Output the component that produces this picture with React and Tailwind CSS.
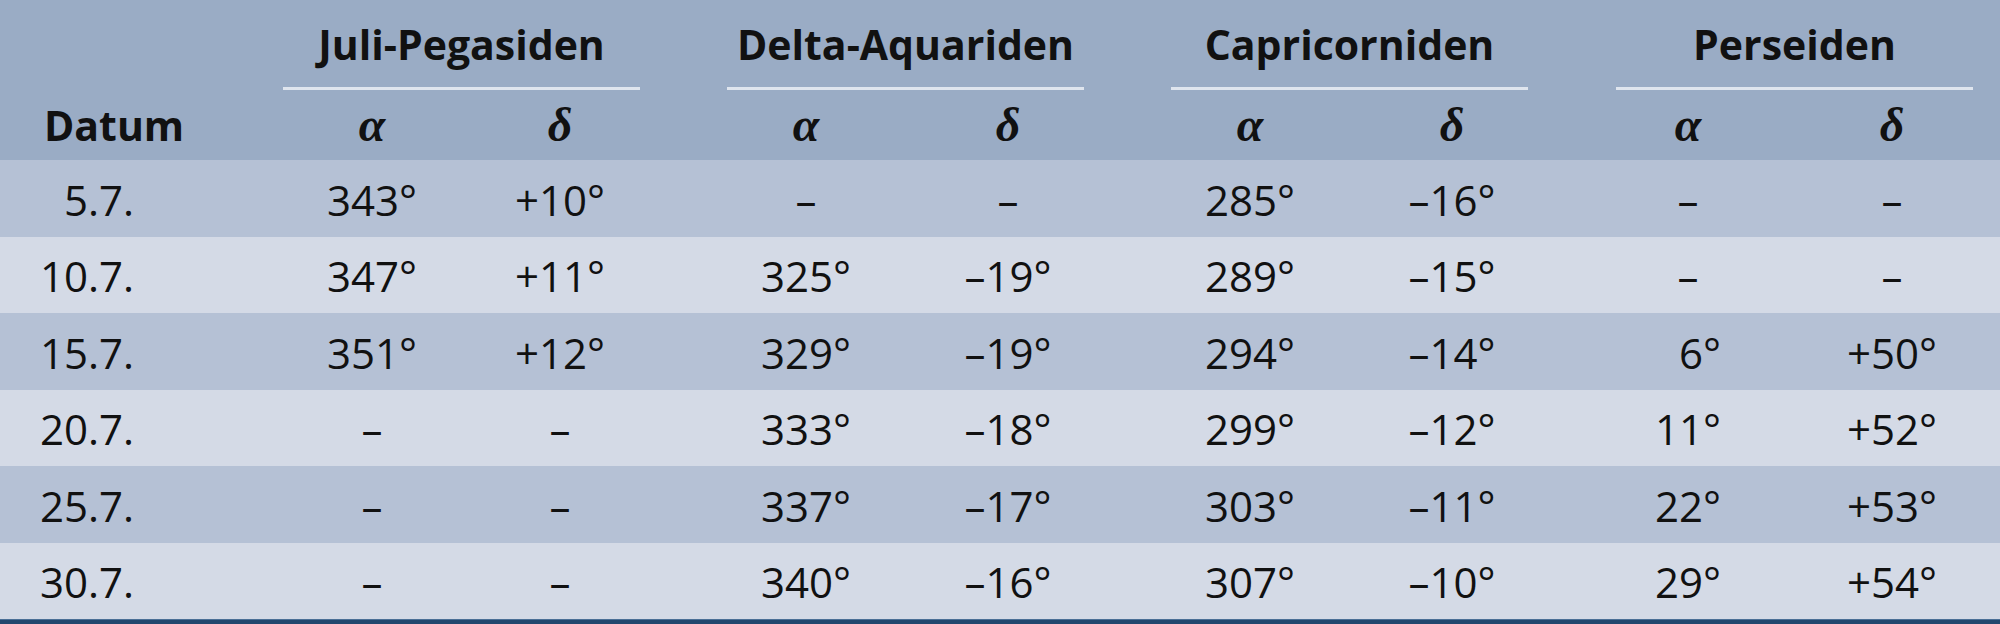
import React from "react";

const COLS =
  "grid grid-cols-[278px_188px_188px_253px_202px_242px_202px_237px_210px]";

const cellPad = [
  "",
  "",
  "",
  "pl-[51px]",
  "",
  "pl-[40px]",
  "",
  "pl-[33px]",
  "pr-[6px]",
];

const groups = [
  { name: "Juli-Pegasiden", ml: "ml-[5px]" },
  { name: "Delta-Aquariden", ml: "ml-[73px]" },
  { name: "Capricorniden", ml: "ml-[62px]" },
  { name: "Perseiden", ml: "ml-[63px]" },
];

const rows = [
  ["5.7.", "343°", "+10°", "–", "–", "285°", "–16°", "–", "–"],
  ["10.7.", "347°", "+11°", "325°", "–19°", "289°", "–15°", "–", "–"],
  ["15.7.", "351°", "+12°", "329°", "–19°", "294°", "–14°", "6°", "+50°"],
  ["20.7.", "–", "–", "333°", "–18°", "299°", "–12°", "11°", "+52°"],
  ["25.7.", "–", "–", "337°", "–17°", "303°", "–11°", "22°", "+53°"],
  ["30.7.", "–", "–", "340°", "–16°", "307°", "–10°", "29°", "+54°"],
];

function Value({ v }) {
  if (v === "6°") {
    return (
      <span>
        <span className="invisible">0</span>6°
      </span>
    );
  }
  return <span>{v}</span>;
}

export default function App() {
  return (
    <div className="w-[2000px] h-[624px] overflow-hidden font-['Open_Sans',sans-serif] text-[#111111] bg-[#d4dae6]">
      {/* Header */}
      <div className="bg-[#9aacc5]">
        <div className="grid grid-cols-[278px_376px_455px_444px_447px] h-[90px]">
          <div />
          {groups.map((g) => (
            <div key={g.name} className="flex">
              <div className={`w-[357px] ${g.ml} flex flex-col items-center pt-[24px]`}>
                <div className="text-[41px] leading-none font-bold h-[41px] whitespace-nowrap">
                  {g.name}
                </div>
                <div className="mt-[22px] h-[3px] w-full bg-[#dfe5ee]" />
              </div>
            </div>
          ))}
        </div>
        <div className={`${COLS} h-[70px]`}>
          <div className="flex items-center pl-[44px] text-[41px] leading-none font-bold">
            Datum
          </div>
          {[0, 1, 2, 3, 4, 5, 6, 7].map((i) => (
            <div
              key={i}
              className={`flex items-center justify-center ${cellPad[i + 1]} font-['Liberation_Serif',serif] italic font-bold text-[48px] leading-none`}
            >
              {i % 2 === 0 ? "α" : "δ"}
            </div>
          ))}
        </div>
      </div>

      {/* Body */}
      {rows.map((r, ri) => (
        <div
          key={ri}
          className={`${COLS} h-[76.5px] ${ri % 2 === 0 ? "bg-[#b5c1d5]" : "bg-[#d4dae6]"}`}
        >
          <div className="flex items-center justify-end pr-[144px] pt-[3px] text-[42px] leading-none">
            {r[0]}
          </div>
          {r.slice(1).map((v, ci) => (
            <div
              key={ci}
              className={`flex items-center justify-center pt-[3px] ${cellPad[ci + 1]} text-[42px] leading-none whitespace-nowrap`}
            >
              <Value v={v} />
            </div>
          ))}
        </div>
      ))}
      <div className="h-[5px] bg-[#22476e] border-t border-[#4a6f96]" />
    </div>
  );
}
